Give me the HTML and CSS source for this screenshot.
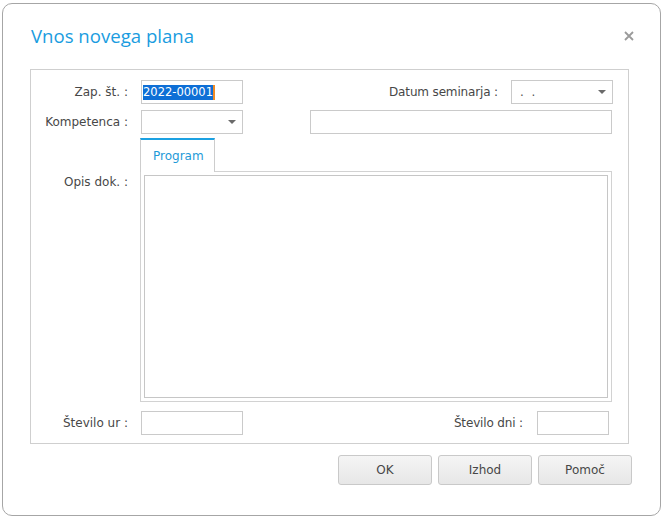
FILE: index.html
```html
<!DOCTYPE html>
<html lang="sl">
<head>
<meta charset="utf-8">
<title>Vnos novega plana</title>
<link rel="stylesheet" href="styles.css">
</head>
<body>
<div class="dialog">
  <div class="titlebar">
    <h1 class="title">Vnos novega plana</h1>
    <svg class="close" width="10" height="10" viewBox="0 0 10 10" aria-label="Zapri">
      <path d="M1 1 L9 9 M9 1 L1 9" stroke="#9a9a9a" stroke-width="1.8" fill="none"/>
    </svg>
  </div>

  <div class="group">
    <div class="row row-1">
      <span class="lbl">Zap. št. :</span>
      <div class="input input-short"><span class="selected">2022-00001</span><span class="caret"></span></div>
      <span class="fill"></span>
      <span class="lbl-free">Datum seminarja :</span>
      <div class="input input-short combo"><span class="dots">.&nbsp;&nbsp;.</span><span class="arrow"></span></div>
    </div>

    <div class="row row-2">
      <span class="lbl">Kompetenca :</span>
      <div class="input input-short combo"><span class="arrow"></span></div>
      <div class="input input-wide"></div>
    </div>

    <div class="row row-3">
      <span class="lbl lbl-top">Opis dok. :</span>
      <div class="tabs">
        <div class="tabstrip"><div class="tab">Program</div></div>
        <div class="panel"><div class="memo"></div></div>
      </div>
    </div>

    <div class="row row-4">
      <span class="lbl">Število ur :</span>
      <div class="input input-short"></div>
      <span class="fill"></span>
      <span class="lbl-free">Število dni :</span>
      <div class="input input-days"></div>
    </div>
  </div>

  <div class="buttons">
    <button class="btn">OK</button>
    <button class="btn">Izhod</button>
    <button class="btn">Pomoč</button>
  </div>
</div>
</body>
</html>
```

FILE: styles.css
```css
* { box-sizing: border-box; }

html, body {
  margin: 0;
  background: #ffffff;
}

body {
  padding: 3px 0 0 2px;
  font-family: "DejaVu Sans", sans-serif;
  font-size: 12px;
  color: #474747;
}

.dialog {
  width: 659px;
  height: 513px;
  border: 1px solid #a6a6a6;
  border-radius: 10px;
  background: #ffffff;
  display: flex;
  flex-direction: column;
}

.titlebar {
  display: flex;
  align-items: center;
  justify-content: space-between;
  padding: 20px 26px 0 28px;
}

.title {
  margin: 0;
  font-family: "Open Sans", sans-serif;
  font-weight: 400;
  font-size: 18.6px;
  line-height: 24px;
  color: #1a9ce0;
}

.close {
  display: block;
}

.group {
  margin: 21px 0 0 27px;
  width: 599px;
  height: 375px;
  border: 1px solid #cfcfcf;
  padding: 10px 0 0 0;
  display: flex;
  flex-direction: column;
}

.row {
  display: flex;
  align-items: center;
}

.row-2 { margin-top: 6px; }
.row-3 { margin-top: 4px; align-items: flex-start; }
.row-4 { margin-top: 9px; }

.row-1 { padding-right: 15px; }
.row-2 { padding-right: 16px; }
.row-3 { padding-right: 16px; }
.row-4 { padding-right: 19px; }

.lbl {
  width: 97px;
  margin-right: 13px;
  text-align: right;
  white-space: nowrap;
  line-height: 14px;
}

.lbl-top { margin-top: 37px; }

.lbl-free {
  margin-right: 13px;
  white-space: nowrap;
  line-height: 14px;
  letter-spacing: -0.15px;
}

.fill { flex: 1; }

.input {
  height: 24px;
  border: 1px solid #cacaca;
  background: #fff;
  display: flex;
  align-items: center;
}

.input-short { width: 102px; }
.input-wide { width: 302px; margin-left: 67px; }
.input-days { width: 72px; margin-left: 1px; }

.selected {
  margin-left: 1px;
  background: #0e6fd6;
  color: #ffffff;
  line-height: 15px;
  font-size: 11.5px;
}

.caret {
  width: 2px;
  height: 15px;
  background: #f08a24;
}

.combo {
  justify-content: space-between;
  padding: 0 6px 0 8px;
}

.row-2 .combo { justify-content: flex-end; }

.dots {
  color: #555;
  line-height: 14px;
}

.arrow {
  width: 0;
  height: 0;
  border-left: 4px solid transparent;
  border-right: 4px solid transparent;
  border-top: 4px solid #6a6a6a;
}

.tabs {
  width: 472px;
  margin-left: -1px;
  display: flex;
  flex-direction: column;
}

.tabstrip {
  display: flex;
  margin-bottom: -1px;
  position: relative;
  z-index: 1;
}

.tab {
  width: 75px;
  height: 34px;
  border-top: 2px solid #1ba1e2;
  border-left: 1px solid #cdcdcd;
  border-right: 1px solid #cdcdcd;
  background: #ffffff;
  color: #1e9ad8;
  padding-left: 12px;
  display: flex;
  align-items: center;
  line-height: 14px;
}

.panel {
  height: 231px;
  border: 1px solid #d2d2d2;
  padding: 3px;
}

.memo {
  height: 100%;
  border: 1px solid #c6c6c6;
}

.buttons {
  display: flex;
  justify-content: flex-end;
  gap: 6px;
  margin-top: 11px;
  padding-right: 28px;
}

.btn {
  width: 94px;
  height: 30px;
  border: 1px solid #c9c9c9;
  border-radius: 3px;
  background: linear-gradient(#f5f5f5, #e7e7e7);
  font-family: "DejaVu Sans", sans-serif;
  font-size: 12px;
  color: #474747;
  padding: 0;
}
```
